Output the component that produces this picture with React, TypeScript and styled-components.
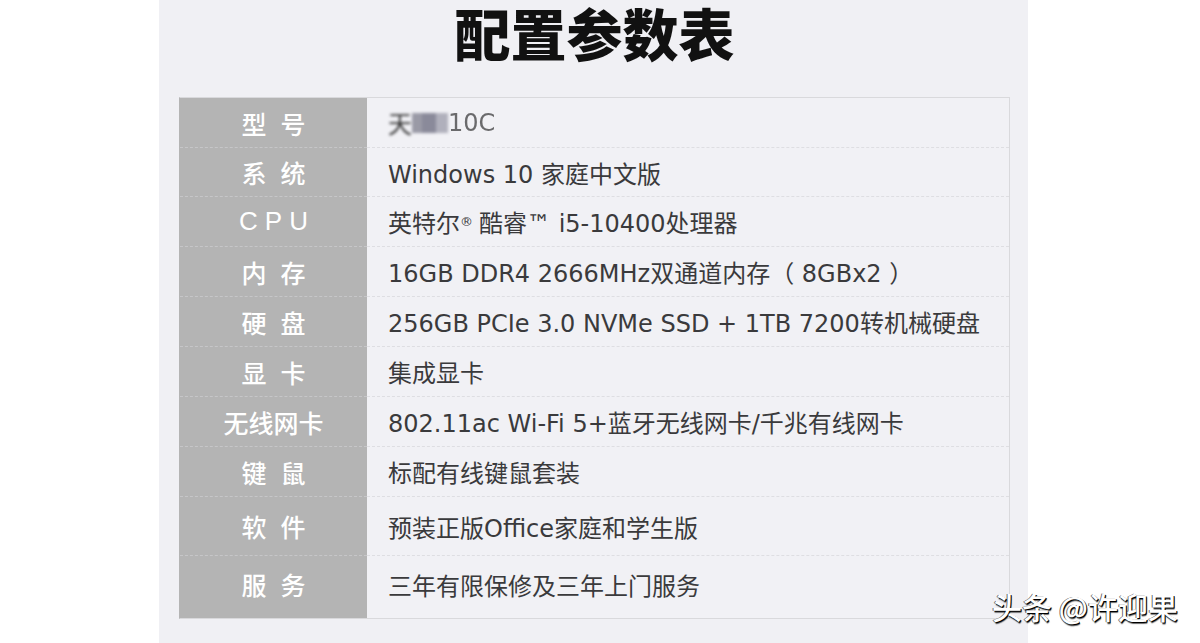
import React from "react";
import styled, { createGlobalStyle } from "styled-components";

const Global = createGlobalStyle`
  html, body { margin: 0; padding: 0; background: #ffffff; }
  body { font-family: "Noto Sans CJK SC", "Noto Sans", sans-serif; }
`;

const Page = styled.div`
  position: relative;
  width: 1200px;
  height: 643px;
  overflow: hidden;
  background: #ffffff;
`;

const Panel = styled.div`
  margin-left: 159px;
  width: 869px;
  height: 643px;
  background: #f0f0f4;
  display: flex;
  flex-direction: column;
  align-items: stretch;
  box-sizing: border-box;
  padding: 0 18px 0 20px;
`;

const Title = styled.h1`
  margin: 0;
  height: 97px;
  display: flex;
  align-items: flex-start;
  justify-content: center;
  padding-top: 2px;
  box-sizing: border-box;
  font-family: "Noto Sans CJK SC", sans-serif;
  font-weight: 900;
  font-size: 56px;
  line-height: 60px;
  color: #111111;
`;

const Table = styled.div`
  display: grid;
  grid-template-columns: 187px 1fr;
  border: 1px solid #d9d9dc;
  border-left-color: #b4b4b4;
  box-sizing: border-box;
`;

const LabelCell = styled.div<{ $h: number; $last?: boolean }>`
  height: ${(p) => p.$h}px;
  background: #b4b4b4;
  color: #ffffff;
  display: flex;
  align-items: center;
  justify-content: center;
  font-size: 25px;
  font-weight: 500;
  box-sizing: border-box;
  padding-bottom: ${(p) => (p.$last ? "6px" : "0px")};
  border-bottom: ${(p) => (p.$last ? "none" : "1px dashed #c6c6c8")};
`;

const LabelText = styled.span<{ $spaced?: boolean }>`
  letter-spacing: ${(p) => (p.$spaced ? "14px" : "0px")};
  margin-right: ${(p) => (p.$spaced ? "-14px" : "0px")};
`;

const LatinLabel = styled.span`
  font-family: "Liberation Sans", Arial, sans-serif;
  font-size: 26px;
  letter-spacing: 7px;
  margin-right: -7px;
`;

const ValueCell = styled.div<{ $h: number; $last?: boolean }>`
  height: ${(p) => p.$h}px;
  background: #f1f1f5;
  color: #3a3a3c;
  display: flex;
  align-items: center;
  padding-left: 21px;
  padding-bottom: ${(p) => (p.$last ? "6px" : "0px")};
  font-family: "DejaVu Sans", "Noto Sans CJK SC", sans-serif;
  font-size: 24px;
  font-weight: 400;
  box-sizing: border-box;
  white-space: pre;
  border-bottom: ${(p) => (p.$last ? "none" : "1px dashed #dedee2")};
`;

const Sup = styled.sup`
  font-size: 13px;
  vertical-align: 9px;
  margin-right: 6px;
`;

const Blur = styled.span`
  display: inline-flex;
  align-items: center;
  filter: blur(1.6px);
  color: #333;
`;

const BlurBlock = styled.span<{ $c: string; $w: number }>`
  display: inline-block;
  width: ${(p) => p.$w}px;
  height: 20px;
  background: ${(p) => p.$c};
`;

const Faded = styled.span`
  color: #6a6a6c;
  filter: blur(0.6px);
`;

const Watermark = styled.div`
  position: absolute;
  left: 992px;
  top: 586px;
  font-family: "Noto Sans CJK SC", sans-serif;
  font-size: 30px;
  line-height: 40px;
  font-weight: 500;
  color: #ffffff;
  text-shadow: 1px 1px 0 #000, -1px 0 0 rgba(0,0,0,0.6), 1px 2px 1px rgba(0,0,0,0.6);
  white-space: nowrap;
`;

type Row = { label: React.ReactNode; value: React.ReactNode; h: number };

const rows: Row[] = [
  {
    label: <LabelText $spaced>型号</LabelText>,
    value: (
      <>
        <Blur>
          <span>天</span>
          <BlurBlock $c="#9a9aa6" $w={10} />
          <BlurBlock $c="#8a8a9a" $w={14} />
          <BlurBlock $c="#b0b0bc" $w={12} />
        </Blur>
        <Faded>10C</Faded>
      </>
    ),
    h: 50,
  },
  { label: <LabelText $spaced>系统</LabelText>, value: "Windows 10 家庭中文版", h: 49 },
  {
    label: <LatinLabel>CPU</LatinLabel>,
    value: (
      <>
        英特尔<Sup>®</Sup>酷睿™ i5-10400处理器
      </>
    ),
    h: 50,
  },
  { label: <LabelText $spaced>内存</LabelText>, value: "16GB DDR4 2666MHz双通道内存（ 8GBx2 ）", h: 50 },
  { label: <LabelText $spaced>硬盘</LabelText>, value: "256GB PCIe 3.0 NVMe SSD + 1TB 7200转机械硬盘", h: 50 },
  { label: <LabelText $spaced>显卡</LabelText>, value: "集成显卡", h: 50 },
  { label: <LabelText>无线网卡</LabelText>, value: "802.11ac Wi-Fi 5+蓝牙无线网卡/千兆有线网卡", h: 50 },
  { label: <LabelText $spaced>键鼠</LabelText>, value: "标配有线键鼠套装", h: 50 },
  { label: <LabelText $spaced>软件</LabelText>, value: "预装正版Office家庭和学生版", h: 59 },
  { label: <LabelText $spaced>服务</LabelText>, value: "三年有限保修及三年上门服务", h: 62 },
];

export default function App() {
  return (
    <Page>
      <Global />
      <Panel>
        <Title>配置参数表</Title>
        <Table>
          {rows.map((r, i) => (
            <React.Fragment key={i}>
              <LabelCell $h={r.h} $last={i === rows.length - 1}>
                {r.label}
              </LabelCell>
              <ValueCell $h={r.h} $last={i === rows.length - 1}>
                {r.value}
              </ValueCell>
            </React.Fragment>
          ))}
        </Table>
      </Panel>
      <Watermark>头条 @许迎果</Watermark>
    </Page>
  );
}
